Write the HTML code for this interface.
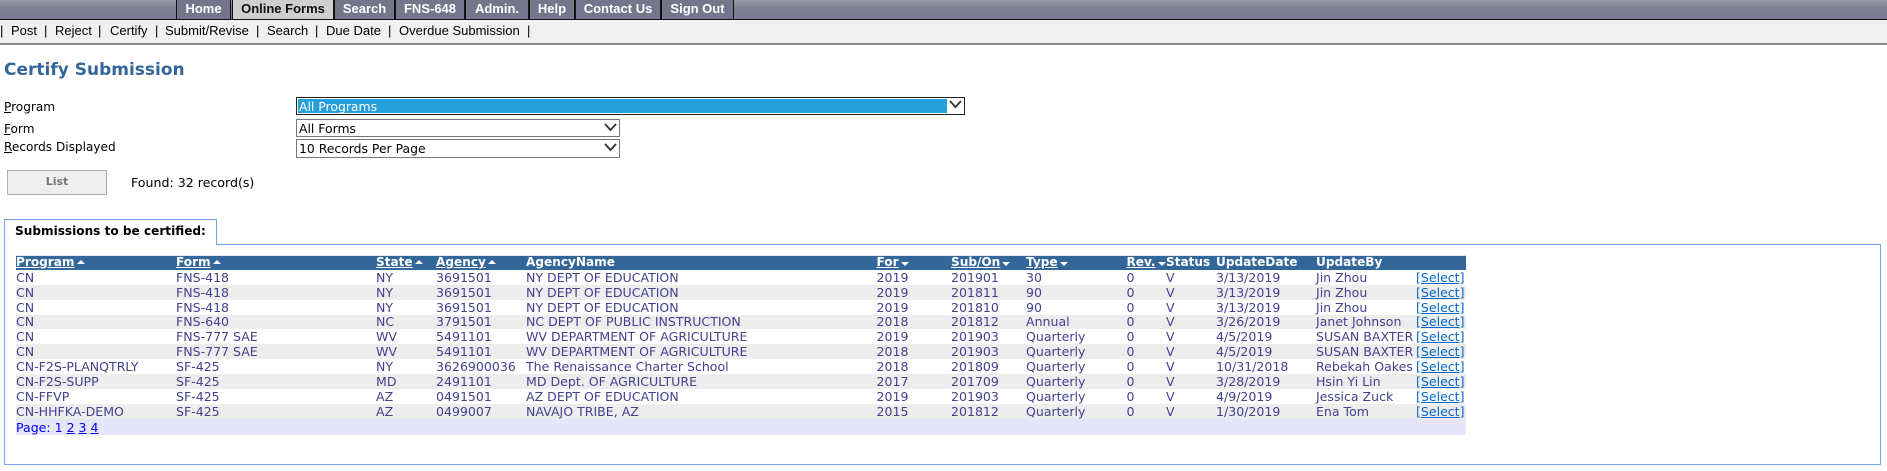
<!DOCTYPE html>
<html><head><meta charset="utf-8"><style>
html,body{margin:0;padding:0;background:#fff;width:1887px;height:471px;overflow:hidden}
body{position:relative;font-family:"DejaVu Sans","Liberation Sans",sans-serif;font-size:12px;color:#000}
.a{position:absolute;white-space:nowrap}
#nav{left:0;top:0;width:1887px;height:19px;background:linear-gradient(#9a9aa8,#7f7f92 45%,#7c7c8e);border-bottom:1px solid #111}
.n{position:absolute;top:0;height:19px;background:#75758c;color:#fff;font:bold 13px/18px "Liberation Sans",sans-serif;text-align:center;box-shadow:1px 0 0 #111,-1px 0 0 #111}
#sub{left:0;top:20px;width:1887px;height:23px;background:#f0f0f0;border-bottom:2px solid #8a8a8a;font:13px/22px "Liberation Sans",sans-serif;box-sizing:content-box}
#sub span{position:absolute;top:0}
h1{position:absolute;left:4px;top:60px;margin:0;font:bold 17px/20px "DejaVu Sans",sans-serif;color:#336699}
.l{left:4px;font-size:12.1px;line-height:14px}
.s{position:absolute;box-sizing:border-box;background:#fff;border:1px solid #777;font-size:12.4px;line-height:17px;padding-left:2px}
.s svg{position:absolute;top:3px}
table{position:absolute;left:16px;top:255px;width:1450px;border-collapse:collapse;table-layout:fixed;font-size:12.55px;color:#45408f}
td,th{padding:0;height:15px;line-height:15px;white-space:nowrap;text-align:left;font-weight:normal;overflow:visible}
th{background:#336699;color:#fff;font-weight:bold;font-size:12.1px;box-shadow:inset 0 1px 0 #dfe7f5}
th u{color:#fff}
tr.g td{background:#eeeded}
tr.s14 td{height:14px;line-height:14px}
i{display:inline-block;width:0;height:0;border-left:4px solid transparent;border-right:4px solid transparent;vertical-align:2px;margin-left:2px}
i.up{border-bottom:4px solid #fff}
i.dn{border-top:4px solid #fff;vertical-align:0}
a{color:#0066cc;text-decoration:underline}
#pg td{background:#e6e6fa;height:16px;color:#0000ff}
#pg a{color:#0000ee}
</style></head><body>
<div class="a" id="nav"></div>
<div class="n" style="left:177px;width:53px">Home</div>
<div class="n" style="left:233px;width:100px;background:#cfcfcf;color:#111">Online Forms</div>
<div class="n" style="left:335px;width:59px">Search</div>
<div class="n" style="left:396px;width:68px">FNS-648</div>
<div class="n" style="left:466px;width:62px">Admin.</div>
<div class="n" style="left:530px;width:44px">Help</div>
<div class="n" style="left:576px;width:84px">Contact Us</div>
<div class="n" style="left:662px;width:71px">Sign Out</div>
<div class="a" id="sub">
<span style="left:0">|</span><span style="left:11px">Post</span><span style="left:44px">|</span><span style="left:55px">Reject</span><span style="left:98px">|</span><span style="left:110px">Certify</span><span style="left:155px">|</span><span style="left:165px">Submit/Revise</span><span style="left:256px">|</span><span style="left:267px">Search</span><span style="left:315px">|</span><span style="left:326px">Due Date</span><span style="left:388px">|</span><span style="left:399px">Overdue Submission</span><span style="left:527px">|</span>
</div>
<h1>Certify Submission</h1>
<div class="a l" style="top:100px"><u>P</u>rogram</div>
<div class="a l" style="top:122px"><u>F</u>orm</div>
<div class="a l" style="top:140px"><u>R</u>ecords Displayed</div>
<div class="s" style="left:296px;top:97px;width:669px;height:18px;border-color:#222;line-height:16px;padding:0">
<div style="position:absolute;left:1px;top:1px;width:649px;height:14px;background:#26a0da;color:#fff;line-height:15px;padding-left:1px;box-sizing:border-box">All Programs</div>
<svg style="right:2px;top:2px" width="13" height="9" viewBox="0 0 13 9"><path d="M1 1l5.5 6L12 1" fill="none" stroke="#333" stroke-width="1.8"/></svg></div>
<div class="s" style="left:296px;top:119px;width:324px;height:18px">All Forms<svg style="right:2px" width="13" height="9" viewBox="0 0 13 9"><path d="M1 1l5.5 6L12 1" fill="none" stroke="#333" stroke-width="1.8"/></svg></div>
<div class="s" style="left:296px;top:139px;width:324px;height:19px">10 Records Per Page<svg style="right:2px" width="13" height="9" viewBox="0 0 13 9"><path d="M1 1l5.5 6L12 1" fill="none" stroke="#333" stroke-width="1.8"/></svg></div>
<div class="a" style="left:7px;top:170px;width:100px;height:25px;box-sizing:border-box;background:#eee;border:1px solid #adadad;color:#777;font-weight:bold;font-size:11px;line-height:22px;text-align:center">List</div>
<div class="a" style="left:131px;top:176px;line-height:14px;font-size:12.6px">Found: 32 record(s)</div>
<div class="a" style="left:4px;top:219px;width:213px;height:26px;box-sizing:border-box;border:1px solid #76a5ef;border-bottom:0;background:#fff;z-index:2;font-weight:bold;font-size:12.1px;line-height:22px;padding-left:10px">Submissions to be certified:</div>
<div class="a" style="left:4px;top:244px;width:1877px;height:221px;box-sizing:border-box;border:1px solid #76a5ef"></div>
<table>
<colgroup><col style="width:160px"><col style="width:200px"><col style="width:60px"><col style="width:90px"><col style="width:350.5px"><col style="width:74.5px"><col style="width:75px"><col style="width:100.5px"><col style="width:39.5px"><col style="width:50px"><col style="width:100px"><col style="width:100px"><col style="width:50px"></colgroup>
<tr><th><u>Program</u><i class="up"></i></th><th><u>Form</u><i class="up"></i></th><th><u>State</u><i class="up"></i></th><th><u>Agency</u><i class="up"></i></th><th>AgencyName</th><th><u>For</u><i class="dn"></i></th><th><u>Sub/On</u><i class="dn"></i></th><th><u>Type</u><i class="dn"></i></th><th><u>Rev.</u><i class="dn"></i></th><th>Status</th><th>UpdateDate</th><th>UpdateBy</th><th></th></tr>
<tr><td>CN</td><td>FNS-418</td><td>NY</td><td>3691501</td><td>NY DEPT OF EDUCATION</td><td>2019</td><td>201901</td><td>30</td><td>0</td><td>V</td><td>3/13/2019</td><td>Jin Zhou</td><td><a>[Select]</a></td></tr>
<tr class="g"><td>CN</td><td>FNS-418</td><td>NY</td><td>3691501</td><td>NY DEPT OF EDUCATION</td><td>2019</td><td>201811</td><td>90</td><td>0</td><td>V</td><td>3/13/2019</td><td>Jin Zhou</td><td><a>[Select]</a></td></tr>
<tr><td>CN</td><td>FNS-418</td><td>NY</td><td>3691501</td><td>NY DEPT OF EDUCATION</td><td>2019</td><td>201810</td><td>90</td><td>0</td><td>V</td><td>3/13/2019</td><td>Jin Zhou</td><td><a>[Select]</a></td></tr>
<tr class="g s14"><td>CN</td><td>FNS-640</td><td>NC</td><td>3791501</td><td>NC DEPT OF PUBLIC INSTRUCTION</td><td>2018</td><td>201812</td><td>Annual</td><td>0</td><td>V</td><td>3/26/2019</td><td>Janet Johnson</td><td><a>[Select]</a></td></tr>
<tr><td>CN</td><td>FNS-777 SAE</td><td>WV</td><td>5491101</td><td>WV DEPARTMENT OF AGRICULTURE</td><td>2019</td><td>201903</td><td>Quarterly</td><td>0</td><td>V</td><td>4/5/2019</td><td>SUSAN BAXTER</td><td><a>[Select]</a></td></tr>
<tr class="g"><td>CN</td><td>FNS-777 SAE</td><td>WV</td><td>5491101</td><td>WV DEPARTMENT OF AGRICULTURE</td><td>2018</td><td>201903</td><td>Quarterly</td><td>0</td><td>V</td><td>4/5/2019</td><td>SUSAN BAXTER</td><td><a>[Select]</a></td></tr>
<tr><td>CN-F2S-PLANQTRLY</td><td>SF-425</td><td>NY</td><td>3626900036</td><td>The Renaissance Charter School</td><td>2018</td><td>201809</td><td>Quarterly</td><td>0</td><td>V</td><td>10/31/2018</td><td>Rebekah Oakes</td><td><a>[Select]</a></td></tr>
<tr class="g"><td>CN-F2S-SUPP</td><td>SF-425</td><td>MD</td><td>2491101</td><td>MD Dept. OF AGRICULTURE</td><td>2017</td><td>201709</td><td>Quarterly</td><td>0</td><td>V</td><td>3/28/2019</td><td>Hsin Yi Lin</td><td><a>[Select]</a></td></tr>
<tr><td>CN-FFVP</td><td>SF-425</td><td>AZ</td><td>0491501</td><td>AZ DEPT OF EDUCATION</td><td>2019</td><td>201903</td><td>Quarterly</td><td>0</td><td>V</td><td>4/9/2019</td><td>Jessica Zuck</td><td><a>[Select]</a></td></tr>
<tr class="g"><td>CN-HHFKA-DEMO</td><td>SF-425</td><td>AZ</td><td>0499007</td><td>NAVAJO TRIBE, AZ</td><td>2015</td><td>201812</td><td>Quarterly</td><td>0</td><td>V</td><td>1/30/2019</td><td>Ena Tom</td><td><a>[Select]</a></td></tr>
<tr id="pg"><td colspan="13">Page: 1 <a><u>2</u></a> <a><u>3</u></a> <a><u>4</u></a></td></tr>
</table>
</body></html>
